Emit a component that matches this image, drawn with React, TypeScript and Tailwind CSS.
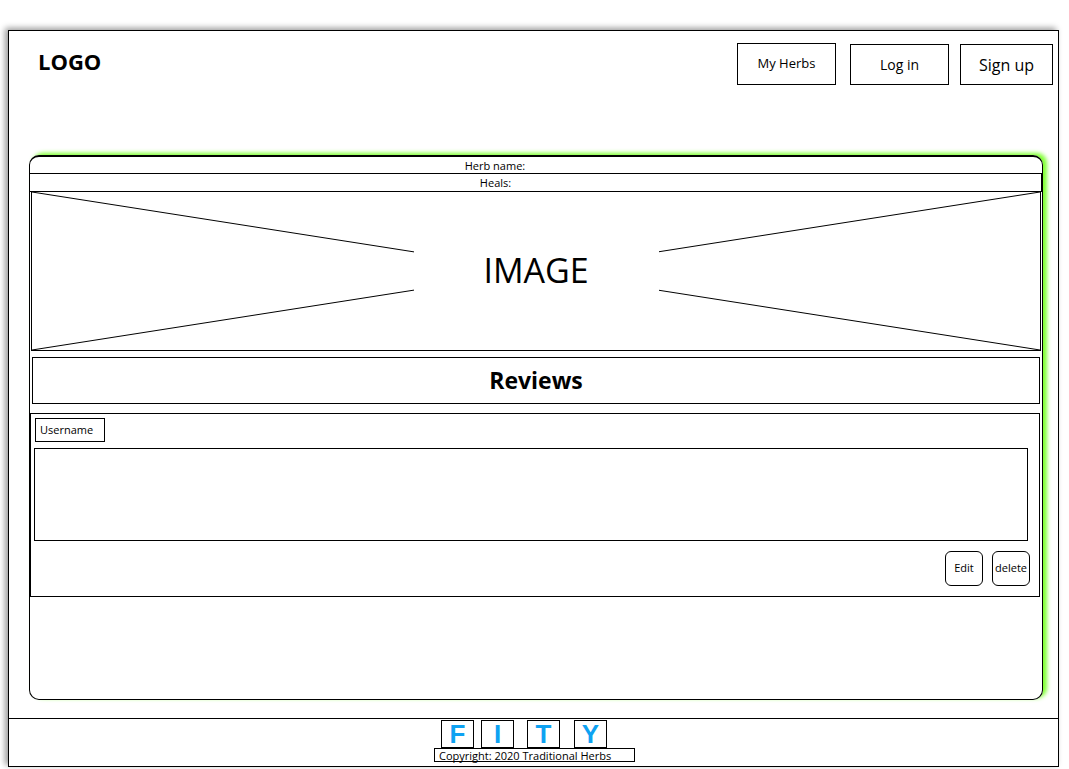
import React from "react";

const font = { fontFamily: '"Open Sans", "Noto Sans", sans-serif' } as React.CSSProperties;

function ImageBox() {
  return (
    <div className="relative ml-[1px] h-[159px] w-[1010px] border-x border-b border-black">
      <svg className="absolute inset-0 h-full w-full" viewBox="0 0 1010 158" preserveAspectRatio="none">
        <line x1="0" y1="0" x2="1010" y2="158" stroke="black" strokeWidth="1" />
        <line x1="1010" y1="0" x2="0" y2="158" stroke="black" strokeWidth="1" />
      </svg>
      <div className="absolute inset-0 flex items-center justify-center">
        <div className="flex h-[42px] w-[245px] items-center justify-center bg-white pb-[3px] text-[34px] leading-none text-black">
          IMAGE
        </div>
      </div>
    </div>
  );
}

function SquareLetter({ ch }: { ch: string }) {
  return (
    <div
      className="flex h-[28px] w-[33px] items-center justify-center border border-black text-[26px] font-bold leading-none text-[#0ea2f2]"
      style={{ fontFamily: '"Liberation Sans", Arial, sans-serif' }}
    >
      {ch}
    </div>
  );
}

export default function App() {
  return (
    <div className="h-[769px] w-[1069px] bg-white" style={font}>
      <div className="pl-[8px] pt-[30px]">
        <div className="flex h-[737px] w-[1051px] flex-col border border-black bg-white shadow-[-3px_-2px_6px_rgba(0,0,0,0.4)]">
          {/* Header */}
          <div className="flex h-[124px] items-start justify-between pl-[29px] pr-[5px] pt-[12px]">
            <div className="mt-[3px] text-[22px] font-bold leading-[30px] text-black">LOGO</div>
            <div className="flex items-start">
              <div className="flex h-[42px] w-[99px] items-center justify-center border border-black text-[13px] text-black">
                My Herbs
              </div>
              <div className="ml-[14px] mt-[1px] flex h-[41px] w-[99px] items-center justify-center border border-black text-[14px] text-black">
                Log in
              </div>
              <div className="ml-[11px] mt-[1px] flex h-[41px] w-[93px] items-center justify-center border border-black text-[16px] text-black">
                Sign up
              </div>
            </div>
          </div>

          {/* Card */}
          <div className="ml-[20px] flex h-[545px] w-[1014px] flex-col rounded-[10px] border border-t-2 border-black shadow-[4px_-2px_4px_#7dff2e]">
            <div className="flex h-[17px] items-center justify-center border-b border-black pr-[82px] text-[11px] leading-none text-black">
              Herb name:
            </div>
            <div className="flex h-[18px] items-center justify-center border-b border-r border-black pr-[80px] text-[11px] leading-none text-black">
              Heals:
            </div>
            <ImageBox />
            <div className="ml-[2px] mt-[6px] flex h-[47px] w-[1008px] items-center justify-center border border-black text-[23px] font-bold text-black">
              Reviews
            </div>
            <div className="mt-[9px] flex w-[1010px] flex-col border border-black pb-[10px]">
              <div className="ml-[4px] mt-[4px] flex h-[24px] w-[70px] items-center border border-black pl-[4px] text-[11px] text-black">
                Username
              </div>
              <div className="ml-[3px] mt-[6px] h-[93px] w-[994px] border border-black" />
              <div className="mt-[10px] flex justify-end gap-[9px] pr-[9px]">
                <div className="flex h-[35px] w-[38px] items-center justify-center rounded-[6px] border border-black text-[11px] text-black">
                  Edit
                </div>
                <div className="flex h-[35px] w-[38px] items-center justify-center rounded-[6px] border border-black text-[11px] text-black">
                  delete
                </div>
              </div>
            </div>
          </div>

          {/* Footer */}
          <div className="mt-[18px] flex flex-1 flex-col border-t border-black pt-[1px]">
            <div className="ml-[432px] flex">
              <SquareLetter ch="F" />
              <div className="ml-[7px]"><SquareLetter ch="I" /></div>
              <div className="ml-[13px]"><SquareLetter ch="T" /></div>
              <div className="ml-[14px]"><SquareLetter ch="Y" /></div>
            </div>
            <div className="ml-[425px] flex h-[14px] w-[201px] items-center border border-black pl-[4px] text-[11px] leading-none text-black">
              Copyright: 2020 Traditional Herbs
            </div>
          </div>
        </div>
      </div>
    </div>
  );
}
